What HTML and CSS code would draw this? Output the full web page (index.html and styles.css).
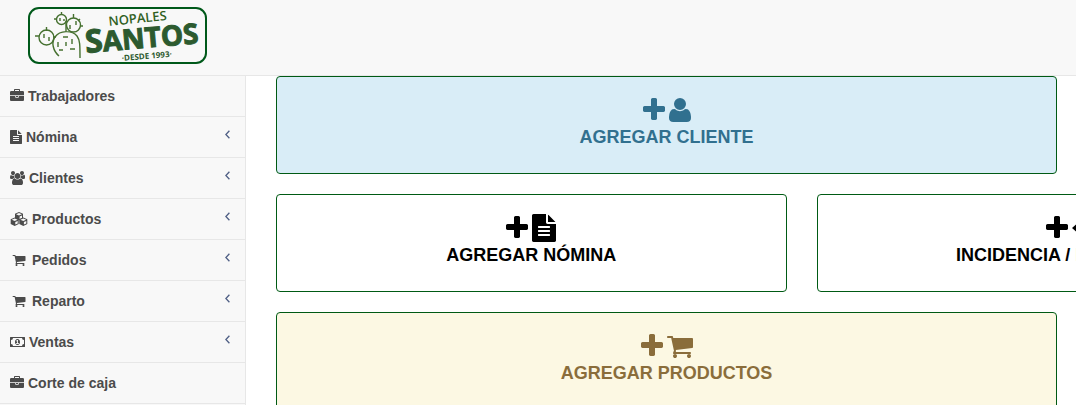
FILE: index.html
```html
<!DOCTYPE html>
<html lang="es">
<head>
  <meta charset="UTF-8">
  <title>Nopales Santos</title>
  <link rel="stylesheet" href="styles.css">
</head>
<body>
  <!-- Iconos -->
  <svg class="sprite" aria-hidden="true">
    <symbol id="plus" viewBox="192 0 1408 1792"><path d="M1600 736v192q0 40-28 68t-68 28h-416v416q0 40-28 68t-68 28h-192q-40 0-68-28t-28-68v-416h-416q-40 0-68-28t-28-68v-192q0-40 28-68t68-28h416v-416q0-40 28-68t68-28h192q40 0 68 28t28 68v416h416q40 0 68 28t28 68z"/></symbol>
    <symbol id="user" viewBox="192 0 1408 1792"><path d="M1600 1405q0 120-73 189.5t-194 69.5h-874q-121 0-194-69.5t-73-189.5q0-53 3.5-103.5t14-109 26.5-108.5 43-97.5 62-81 85.5-53.5 111.5-20q9 0 42 21.5t74.5 48 108 48 133.500 21.500 133.500-21.500 108-48 74.500-48 42-21.500q61 0 111.500 20t85.500 53.500 62 81 43 97.500 26.500 108.500 14 109 3.500 103.500zm-320-893q0 159-112.500 271.500t-271.500 112.500-271.500-112.500-112.500-271.500 112.500-271.500 271.500-112.500 271.500 112.500 112.500 271.500z"/></symbol>
    <symbol id="file" viewBox="128 0 1536 1792"><path d="M1596 476q14 14 28 36h-472v-472q22 14 36 28zm-476 164h544v1056q0 40-28 68t-68 28h-1344q-40 0-68-28t-28-68v-1600q0-40 28-68t68-28h800v544q0 40 28 68t68 28zm160 736v-64q0-14-9-23t-23-9h-704q-14 0-23 9t-9 23v64q0 14 9 23t23 9h704q14 0 23-9t9-23zm0-256v-64q0-14-9-23t-23-9h-704q-14 0-23 9t-9 23v64q0 14 9 23t23 9h704q14 0 23-9t9-23zm0-256v-64q0-14-9-23t-23-9h-704q-14 0-23 9t-9 23v64q0 14 9 23t23 9h704q14 0 23-9t9-23z"/></symbol>
    <symbol id="cart" viewBox="64 0 1664 1792"><path d="M704 1536q0 52-38 90t-90 38-90-38-38-90 38-90 90-38 90 38 38 90zm896 0q0 52-38 90t-90 38-90-38-38-90 38-90 90-38 90 38 38 90zm128-1088v512q0 24-16.5 42.5t-40.5 21.5l-1044 122q13 60 13 70 0 16-24 64h920q26 0 45 19t19 45-19 45-45 19h-1024q-26 0-45-19t-19-45q0-11 8-31.5t16-36 21.5-40 15.5-29.5l-177-823h-204q-26 0-45-19t-19-45 19-45 45-19h256q16 0 28.5 6.5t19.5 15.5 13 24.5 8 26 5.5 29.5 4.5 26h1201q26 0 45 19t19 45z"/></symbol>
    <symbol id="briefcase" viewBox="0 0 1792 1792"><path d="M640 256h512v-128h-512v128zm1152 640v480q0 66-47 113t-113 47h-1472q-66 0-113-47t-47-113v-480h672v160q0 26 19 45t45 19h320q26 0 45-19t19-45v-160h672zm-768 0v128h-256v-128h256zm768-480v384h-1792v-384q0-66 47-113t113-47h352v-160q0-40 28-68t68-28h576q40 0 68 28t28 68v160h352q66 0 113 47t47 113z"/></symbol>
    <symbol id="users" viewBox="-64 0 1920 1792"><path d="M529 896q-162 5-265 128h-134q-82 0-138-40.5t-56-118.5q0-353 124-353 6 0 43.5 21t97.5 42.5 119 21.5q67 0 133-23-5 37-5 66 0 159 93 293zm1071 637q0 120-73 189.5t-194 69.5h-874q-121 0-194-69.5t-73-189.5q0-53 3.5-103.5t14-109 26.5-108.5 43-97.5 62-81 85.5-53.5 111.5-20q10 0 43 21.5t73 48 107 48 135 21.5 135-21.5 107-48 73-48 43-21.5q61 0 111.5 20t85.5 53.5 62 81 43 97.5 26.5 108.5 14 109 3.5 103.5zm-1024-1277q0 106-75 181t-181 75-181-75-75-181 75-181 181-75 181 75 75 181zm704 384q0 159-112.5 271.5t-271.5 112.5-271.5-112.5-112.5-271.5 112.5-271.5 271.5-112.5 271.5 112.5 112.5 271.5zm576 225q0 78-56 118.5t-138 40.5h-134q-103-123-265-128 93-134 93-293 0-29-5-66 66 23 133 23 59 0 119-21.5t97.5-42.5 43.5-21q124 0 124 353zm-128-609q0 106-75 181t-181 75-181-75-75-181 75-181 181-75 181 75 75 181z"/></symbol>
    <symbol id="cubes" viewBox="0 0 18 14">
      <g id="cube"><path d="M9 0l4 1.700v4.800L9 8.500 5 6.500V1.700z"/><path class="hollow" d="M9 1l2.900 1.200L9 3.500 6.100 2.200zM9.600 4.600l2.400-1.100v2.400L9.600 7.100z"/></g>
      <use href="#cube" x="-4.300" y="5.500"/><use href="#cube" x="4.300" y="5.500"/>
    </symbol>
    <symbol id="money" viewBox="0 0 15 14">
      <path fill-rule="evenodd" d="M.5 2h14q.5 0 .5.500v9q0 .5-.5.500H.500q-.5 0-.5-.5v-9Q0 2 .5 2zM3 3q0 2-2 2v4q2 0 2 2h9q0-2 2-2V5q-2 0-2-2z"/>
      <path fill-rule="evenodd" d="M7.500 4c1.700 0 2.500 1.400 2.500 3s-.8 3-2.500 3S5 8.600 5 7s.8-3 2.500-3zm-.4 1L6 5.900l.5.600.6-.4v2H6.200v.8h2.600v-.8H8V5z"/>
    </symbol>
    <symbol id="angle" viewBox="0 0 5 9"><path fill="none" stroke="currentColor" stroke-width="1.300" d="M4.400.800.900 4.500l3.500 3.700"/></symbol>
    <symbol id="arrows" viewBox="0 0 26 28"><path d="M0 14l5-4.500v3h6.500V7h-3L13 2l4.500 5h-3v5.500H21v-3l5 4.500-5 4.500v-3h-6.500V21h3L13 26l-4.500-5h3v-5.500H5v3z"/></symbol>
  </svg>

  <header class="navbar">
    <a class="brand" href="#">
      <svg class="logo" viewBox="0 0 180 58" role="img" aria-label="Nopales Santos, desde 1993">
        <rect class="logo-frame" x="1" y="1" width="177" height="55" rx="10"/>
        <g class="cactus">
          <path d="M31 49c-6-5-8-14-4-19 5-7 17-7 22-1 3 4 3 9 3 22M38 14v11"/>
          <circle cx="18.500" cy="30.500" r="7.500"/>
          <circle cx="33.500" cy="12.500" r="5"/>
          <circle cx="45.500" cy="18" r="7"/>
          <path d="M7 29h4M18.500 20v4M16 27v4M21 30v4M25 30h3M26 12h3M33.500 5v3M32 11v3M36 12v2M45.500 7v4M52 12l-2 2M52 19h3M42 18v4M48 14v4"/>
          <path d="M30 35v5M35 30h5M38 35v4M44 32v5M31 43h4M42 42h5"/>
        </g>
        <text class="logo-top" x="81" y="19" transform="rotate(-6 81 19)">NOPALES</text>
        <text class="logo-name" x="58" y="46" transform="rotate(-5 58 46)"><tspan class="logo-initial">S</tspan>ANTOS</text>
        <text class="logo-since" x="94" y="54" transform="rotate(-5 94 54)">·DESDE 1993·</text>
      </svg>
    </a>
  </header>

  <div class="wrapper">
    <nav class="sidebar">
      <ul>
        <li><a href="#"><svg class="icon w14"><use href="#briefcase"/></svg><span>Trabajadores</span></a></li>
        <li><a href="#"><svg class="icon w12"><use href="#file"/></svg><span>Nómina</span><svg class="angle"><use href="#angle"/></svg></a></li>
        <li><a href="#"><svg class="icon w15"><use href="#users"/></svg><span>Clientes</span><svg class="angle"><use href="#angle"/></svg></a></li>
        <li><a href="#"><svg class="icon w18"><use href="#cubes"/></svg><span>Productos</span><svg class="angle"><use href="#angle"/></svg></a></li>
        <li><a href="#"><svg class="icon w18"><use href="#cart"/></svg><span>Pedidos</span><svg class="angle"><use href="#angle"/></svg></a></li>
        <li><a href="#"><svg class="icon w18"><use href="#cart"/></svg><span>Reparto</span><svg class="angle"><use href="#angle"/></svg></a></li>
        <li><a href="#"><svg class="icon w15"><use href="#money"/></svg><span>Ventas</span><svg class="angle"><use href="#angle"/></svg></a></li>
        <li><a href="#"><svg class="icon w14"><use href="#briefcase"/></svg><span>Corte de caja</span></a></li>
      </ul>
    </nav>

    <main class="content">
      <div class="row halves">
        <a class="panel info" href="#">
          <span class="icons"><svg class="w22"><use href="#plus"/></svg><svg class="w22"><use href="#user"/></svg></span>
          <span>AGREGAR CLIENTE</span>
        </a>
      </div>
      <div class="row thirds">
        <a class="panel" href="#">
          <span class="icons"><svg class="w22"><use href="#plus"/></svg><svg class="w24"><use href="#file"/></svg></span>
          <span>AGREGAR NÓMINA</span>
        </a>
        <a class="panel" href="#">
          <span class="icons"><svg class="w22"><use href="#plus"/></svg><svg class="w26"><use href="#arrows"/></svg></span>
          <span>INCIDENCIA / PRÉSTAMOS</span>
        </a>
      </div>
      <div class="row halves">
        <a class="panel warning" href="#">
          <span class="icons"><svg class="w22"><use href="#plus"/></svg><svg class="w26"><use href="#cart"/></svg></span>
          <span>AGREGAR PRODUCTOS</span>
        </a>
      </div>
    </main>
  </div>
</body>
</html>
```

FILE: styles.css
```css
:root {
  --green: #005a14;
  --bar-bg: #f8f8f8;
  --line: #e7e7e7;
  --text: #4b4b4b;
}

* {
  margin: 0;
  padding: 0;
  box-sizing: border-box;
}

body {
  min-height: 100vh;
  display: flex;
  flex-direction: column;
  overflow: hidden;
  background: #fff;
  color: var(--text);
  font-family: "Liberation Sans", Arial, sans-serif;
  font-size: 14px;
  font-weight: bold;
  line-height: 20px;
}

a {
  color: inherit;
  text-decoration: none;
}

svg {
  fill: currentColor;
}

.sprite {
  display: none;
}

.hollow {
  fill: var(--bar-bg);
}

.navbar {
  padding: 7px 28px 10px;
  background: var(--bar-bg);
  border-bottom: 1px solid var(--line);
}
.brand, .logo {
  display: block;
}
.brand {
  width: 180px;
}
.logo {
  width: 180px;
  height: 58px;
}
.logo-frame {
  fill: none;
  stroke: #00591a;
  stroke-width: 2;
}
.cactus {
  fill: none;
  stroke: #45702f;
  stroke-width: 1.4;
}
.logo text {
  font-family: "Open Sans", "Noto Sans", sans-serif;
  font-weight: bold;
  fill: #2c5a2f;
}
.logo .logo-top {
  font-size: 13px;
  font-weight: 600;
  fill: #30601f;
}
.logo .logo-name {
  font-size: 28px;
  stroke: #2c5a2f;
  stroke-width: 1;
}
.logo .logo-initial {
  font-size: 32px;
}
.logo .logo-since {
  font-size: 8px;
}

.wrapper {
  flex: 1;
  display: flex;
}

.sidebar {
  flex: 0 0 246px;
  background: var(--bar-bg);
  border-right: 1px solid var(--line);
}
.sidebar ul {
  list-style: none;
}
.sidebar li {
  border-bottom: 1px solid var(--line);
}
.sidebar a {
  display: flex;
  align-items: center;
  gap: 4px;
  padding: 10px 15px 10px 10px;
}
.icon {
  height: 14px;
}
.angle {
  width: 5px;
  height: 9px;
  margin: 0 0 5px auto;
  color: #4f5f85;
}

.content {
  flex: 1;
  min-width: 0;
  display: flex;
  flex-direction: column;
  gap: 20px;
  padding-left: 30px;
}
.row {
  width: 199%;
  display: grid;
  gap: 30px;
}
.halves {
  grid-template-columns: repeat(2, 1fr);
}
.thirds {
  grid-template-columns: repeat(3, 1fr);
}

.panel {
  display: flex;
  flex-direction: column;
  align-items: center;
  gap: 1px;
  padding: 19px 15px 24px;
  border: 1px solid var(--green);
  border-radius: 4px;
  color: #000;
  font-size: 18px;
  line-height: 24px;
  white-space: nowrap;
}
.icons {
  display: flex;
  gap: 4px;
}
.icons svg {
  height: 28px;
}
.info {
  background: #d9edf7;
  color: #31708f;
}
.warning {
  background: #fcf8e3;
  color: #8a6d3b;
}

.w12 { width: 12px; }
.w14 { width: 14px; }
.w15 { width: 15px; }
.w18 { width: 18px; }
.w22 { width: 22px; }
.w24 { width: 24px; }
.w26 { width: 26px; }
```
